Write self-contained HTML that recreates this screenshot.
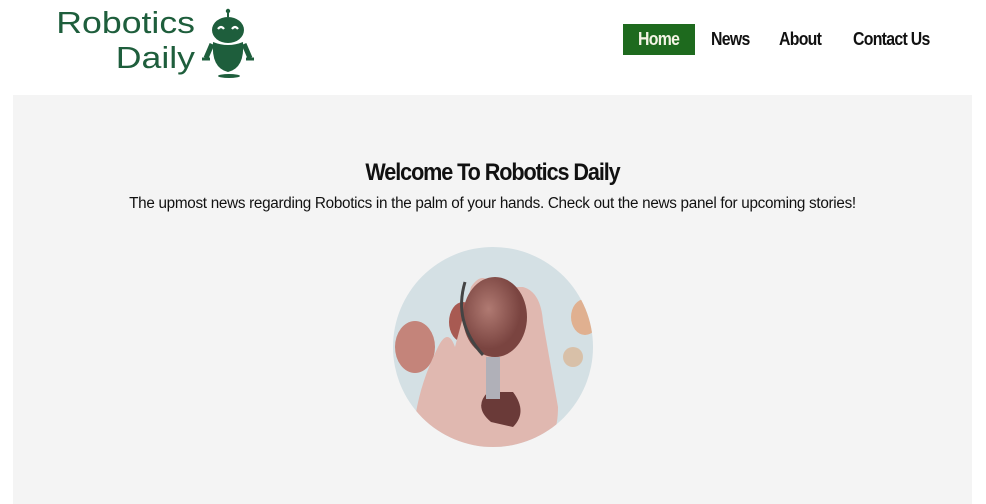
<!DOCTYPE html>
<html><head><style>
*{margin:0;padding:0;box-sizing:border-box}
body{width:986px;height:504px;background:#fff;font-family:"Liberation Sans",sans-serif;position:relative;overflow:hidden}
.logo{position:absolute;left:15px;top:5px;color:#1e5e3c;font-size:31px;line-height:35px;text-align:right;width:180px;transform:scaleX(1.15);transform-origin:right}
.nav a{position:absolute;top:24px;height:31px;line-height:31px;font-size:18px;font-weight:bold;color:#111;text-decoration:none;letter-spacing:-0.8px;transform:scaleX(0.88);transform-origin:left}
.main{position:absolute;left:13px;top:95px;width:959px;height:409px;background:#f4f4f4}
h1{position:absolute;top:64px;left:0;width:100%;text-align:center;font-size:24px;letter-spacing:-1.2px;color:#111;transform:scaleX(0.9)}
p{position:absolute;top:100px;left:0;width:100%;text-align:center;font-size:15.5px;color:#111;letter-spacing:-0.3px;transform:scaleX(0.985)}
</style></head><body>
<div class="logo">Robotics<br>Daily</div>
<svg style="position:absolute;left:200px;top:8px" width="56" height="70" viewBox="0 0 56 70">
<line x1="28" y1="2" x2="28" y2="9" stroke="#1e5e3c" stroke-width="2"/>
<circle cx="28" cy="3" r="2.2" fill="#1e5e3c"/>
<ellipse cx="28" cy="22" rx="16" ry="13" fill="#1e5e3c"/>
<path d="M18 21 q3-4 6 0 M32 21 q3-4 6 0" stroke="#fff" stroke-width="2.2" fill="none"/>
<path d="M13 34 Q11 60 28 64 Q45 60 43 34 Q28 40 13 34Z" fill="#1e5e3c"/>
<path d="M12 36 L6 50 M44 36 L50 50" stroke="#1e5e3c" stroke-width="5"/>
<path d="M2 51 h8 M46 51 h8" stroke="#1e5e3c" stroke-width="3"/>
<ellipse cx="29" cy="68" rx="11" ry="2" fill="#1e5e3c"/>
</svg>
<div class="nav">
<div style="position:absolute;left:623px;top:24px;width:72px;height:31px;background:#1e6a1e"></div>
<a style="left:638px;color:#f4f4e4">Home</a>
<a style="left:711px">News</a>
<a style="left:779px">About</a>
<a style="left:853px">Contact Us</a>
</div>
<div class="main">
<h1>Welcome To Robotics Daily</h1>
<p>The upmost news regarding Robotics in the palm of your hands. Check out the news panel for upcoming stories!</p>
<svg style="position:absolute;left:380px;top:152px" width="200" height="200" viewBox="0 0 200 200">
<defs><clipPath id="c"><circle cx="100" cy="100" r="100"/></clipPath>
<radialGradient id="g" cx="0.4" cy="0.4"><stop offset="0" stop-color="#b07a72"/><stop offset="1" stop-color="#7a4440"/></radialGradient></defs>
<g clip-path="url(#c)">
<rect width="200" height="200" fill="#d4e0e4"/>
<ellipse cx="22" cy="100" rx="20" ry="26" fill="#c4847a"/>
<ellipse cx="70" cy="75" rx="14" ry="20" fill="#a85a52"/>
<path d="M20 200 Q20 150 45 100 Q55 80 62 100 L78 40 Q90 22 100 40 L130 40 Q148 45 150 75 L165 160 Q165 200 140 200Z" fill="#e0b8b0"/>
<path d="M98 175 Q80 160 95 145 L120 145 Q135 165 120 180Z" fill="#6a3a38"/>
<rect x="93" y="110" width="14" height="42" fill="#b0b0b8"/>
<ellipse cx="102" cy="70" rx="32" ry="40" fill="url(#g)"/>
<path d="M72 35 Q60 75 90 108" stroke="#444" stroke-width="3" fill="none"/>
<ellipse cx="192" cy="70" rx="14" ry="18" fill="#e0b090"/>
<ellipse cx="180" cy="110" rx="10" ry="10" fill="#d8c0a8"/>
</g></svg>
</div>
</body></html>
